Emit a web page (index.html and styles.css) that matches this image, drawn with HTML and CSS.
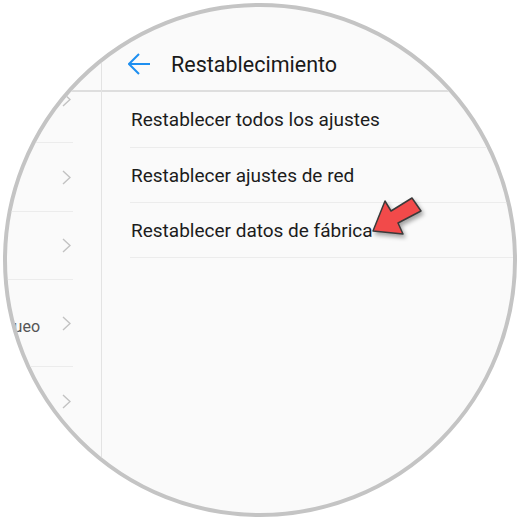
FILE: index.html
```html
<!DOCTYPE html>
<html lang="es">
<head>
    <meta charset="UTF-8">
    <meta name="viewport" content="width=device-width, initial-scale=1.0">
    <title>Restablecimiento</title>
    <link rel="stylesheet" href="styles.css">
</head>
<body>
    <div class="lens">
        <div class="screen">
            <div class="side">
                <div class="side-top"></div>
                <div class="side-row first">
                    <span class="side-label"></span>
                    <svg class="chev" viewBox="0 0 9 15"><polyline points="1,1 8,7.5 1,14"/></svg>
                </div>
                <div class="side-row r2">
                    <span class="side-label"></span>
                    <svg class="chev" viewBox="0 0 9 15"><polyline points="1,1 8,7.5 1,14"/></svg>
                </div>
                <div class="side-row r3">
                    <span class="side-label"></span>
                    <svg class="chev" viewBox="0 0 9 15"><polyline points="1,1 8,7.5 1,14"/></svg>
                </div>
                <div class="side-row r4">
                    <span class="side-label">Pantalla de bloqueo</span>
                    <svg class="chev" viewBox="0 0 9 15"><polyline points="1,1 8,7.5 1,14"/></svg>
                </div>
                <div class="side-row r5">
                    <span class="side-label"></span>
                    <svg class="chev" viewBox="0 0 9 15"><polyline points="1,1 8,7.5 1,14"/></svg>
                </div>
            </div>

            <div class="main">
                <div class="bar">
                    <svg class="back" viewBox="0 0 22 22">
                        <polyline points="11,1 1,11 11,21"/>
                        <line x1="1" y1="11" x2="22" y2="11"/>
                    </svg>
                    <span class="bar-title">Restablecimiento</span>
                </div>
                <div class="list">
                    <div class="item tall">Restablecer todos los ajustes</div>
                    <div class="item">Restablecer ajustes de red</div>
                    <div class="item">Restablecer datos de fábrica</div>
                </div>
            </div>
        </div>

        <!-- annotation arrow -->
        <svg class="pointer" viewBox="0 0 70 60">
            <polygon points="10,41 22,11 28,21 49,8 58,21 35,33 40,44"/>
        </svg>
    </div>
</body>
</html>
```

FILE: styles.css
```css
body {
    margin: 0;
    background: #fff;
    font-family: Roboto, "Noto Sans", sans-serif;
}

.lens {
    position: relative;
    box-sizing: border-box;
    width: 514px;
    height: 514px;
    margin: 3px;
    border: 4px solid #c4c4c4;
    border-radius: 50%;
    overflow: hidden;
    background: #fafafa;
}

.screen {
    display: flex;
    height: 100%;
}

/* left settings column */
.side {
    box-sizing: border-box;
    width: 95px;
    flex-shrink: 0;
    border-right: 1px solid #e3e3e3;
}

.side-top {
    box-sizing: border-box;
    height: 85px;
    border-bottom: 2px solid #dedede;
}

.side-row {
    box-sizing: border-box;
    display: flex;
    align-items: center;
    margin-right: 28px;
    padding-right: 2px;
    border-bottom: 1px solid #ececec;
}

.side-row.first { height: 51px; align-items: flex-start; }
.side-row.r2 { height: 69px; }
.side-row.r3 { height: 68px; }
.side-row.r4 { height: 87px; }
.side-row.r5 { height: 68px; border-bottom: none; }

/* the column is cut off on the left, so labels hang out to that side */
.side-label {
    flex: 1;
    min-width: 0;
    direction: rtl;
    text-align: right;
    white-space: nowrap;
    font-size: 16px;
    color: #555;
    padding-top: 6px;
}

.chev {
    flex-shrink: 0;
    width: 9px;
    height: 15px;
    margin-left: 22px;
    fill: none;
    stroke: #c2c2c2;
    stroke-width: 1.4;
}

/* right pane */
.main {
    flex: 1;
}

.bar {
    box-sizing: border-box;
    display: flex;
    align-items: center;
    height: 85px;
    padding: 31px 0 0 26px;
    border-bottom: 2px solid #dedede;
}

.back {
    width: 22px;
    height: 22px;
    fill: none;
    stroke: #1e8ff0;
    stroke-width: 2;
}

.bar-title {
    margin-left: 21px;
    font-size: 21.5px;
    color: #1a1a1a;
}

.item {
    box-sizing: border-box;
    display: flex;
    align-items: center;
    height: 55px;
    margin-left: 28px;
    padding-left: 1px;
    border-bottom: 1px solid #ececec;
    font-size: 19px;
    color: #1c1c1c;
    white-space: nowrap;
}

.item.tall { height: 56px; }

.pointer {
    position: absolute;
    left: 356px;
    top: 183px;
    width: 70px;
    height: 60px;
    fill: #f24a4a;
    stroke: #3a3a3a;
    stroke-width: 1.5;
    stroke-linejoin: round;
    filter: drop-shadow(2px 3px 2px rgba(0, 0, 0, 0.35));
}
```
